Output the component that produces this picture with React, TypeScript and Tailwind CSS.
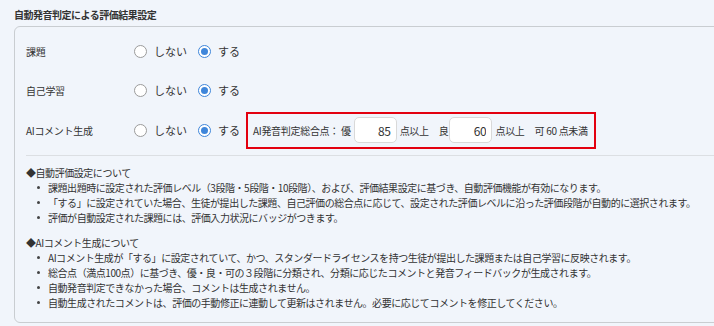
import React from 'react';

const font = { fontFamily: '"Noto Sans CJK JP", "Noto Sans", sans-serif' };

const Radio = ({ checked, label }: { checked: boolean; label: string }) => (
  <label className="flex items-center gap-[7px]">
    <span
      className={
        checked
          ? 'flex h-[13px] w-[13px] items-center justify-center rounded-full border border-[#3f86da] bg-white'
          : 'flex h-[13px] w-[13px] items-center justify-center rounded-full border border-[#9b9b9b] bg-white'
      }
    >
      {checked && <span className="h-[7px] w-[7px] rounded-full bg-[#3f86da]" />}
    </span>
    <span className="text-[11px] text-[#333]">{label}</span>
  </label>
);

const SettingRow = ({ label, height, children }: { label: string; height: string; children?: React.ReactNode }) => (
  <div className={`flex items-center ${height}`}>
    <div className="w-[108px] text-[10px] tracking-[-0.3px] text-[#333]">{label}</div>
    <div className="flex items-center gap-[11px]">
      <Radio checked={false} label="しない" />
      <Radio checked={true} label="する" />
    </div>
    {children}
  </div>
);

const ScoreInput = ({ value }: { value: string }) => (
  <input
    readOnly
    value={value}
    className="h-[26px] w-[43px] rounded-[5px] border border-[#d9d9d9] bg-white pr-[5px] text-right text-[12px] text-[#333] outline-none"
  />
);

const Bullet = ({ children }: { children: React.ReactNode }) => (
  <li className="flex h-[15px] items-center">
    <span className="ml-[11px] mr-[8px] h-[3px] w-[3px] rounded-full bg-[#444]" />
    <span>{children}</span>
  </li>
);

export default function App() {
  return (
    <div className="h-[326px] w-[714px] overflow-hidden bg-[#f1f5fb] pl-[14px] pt-[8px]" style={font}>
      <h2 className="h-[14px] text-[10px] font-bold leading-[14px] tracking-[-0.5px] text-[#333]">
        自動発音判定による評価結果設定
      </h2>

      <div className="mt-[4px] h-[297px] w-[720px] rounded-[6px] border border-[#c9cdd1] px-[11px] pt-[5px]">
        <SettingRow label="課題" height="h-[39px]" />
        <SettingRow label="自己学習" height="h-[38px]" />
        <SettingRow label="AIコメント生成" height="h-[42px]">
          <div className="ml-[6px] flex h-[37px] w-[350px] items-center border-2 border-[#e3000f] pl-[5px] text-[10px] tracking-[-0.3px] text-[#333]">
            <span>AI発音判定総合点： 優</span>
            <span className="ml-[3px]"><ScoreInput value="85" /></span>
            <span className="ml-[3px]">点以上</span>
            <span className="ml-[10px]">良</span>
            <span className="ml-[1px]"><ScoreInput value="60" /></span>
            <span className="ml-[3px]">点以上</span>
            <span className="ml-[10px]">可 60 点未満</span>
          </div>
        </SettingRow>

        <div className="mt-[4px] border-t border-[#dcdfe3]" />

        <div className="pt-[9px] text-[10px] tracking-[-0.45px] text-[#333]">
          <p className="h-[15px] leading-[15px]">◆自動評価設定について</p>
          <ul>
            <Bullet>課題出題時に設定された評価レベル（3段階・5段階・10段階）、および、評価結果設定に基づき、自動評価機能が有効になります。</Bullet>
            <Bullet>「する」に設定されていた場合、生徒が提出した課題、自己評価の総合点に応じて、設定された評価レベルに沿った評価段階が自動的に選択されます。</Bullet>
            <Bullet>評価が自動設定された課題には、評価入力状況にバッジがつきます。</Bullet>
          </ul>

          <p className="mt-[10px] h-[15px] leading-[15px]">◆AIコメント生成について</p>
          <ul>
            <Bullet>AIコメント生成が「する」に設定されていて、かつ、スタンダードライセンスを持つ生徒が提出した課題または自己学習に反映されます。</Bullet>
            <Bullet>総合点（満点100点）に基づき、優・良・可の３段階に分類され、分類に応じたコメントと発音フィードバックが生成されます。</Bullet>
            <Bullet>自動発音判定できなかった場合、コメントは生成されません。</Bullet>
            <Bullet>自動生成されたコメントは、評価の手動修正に連動して更新はされません。必要に応じてコメントを修正してください。</Bullet>
          </ul>
        </div>
      </div>
    </div>
  );
}
